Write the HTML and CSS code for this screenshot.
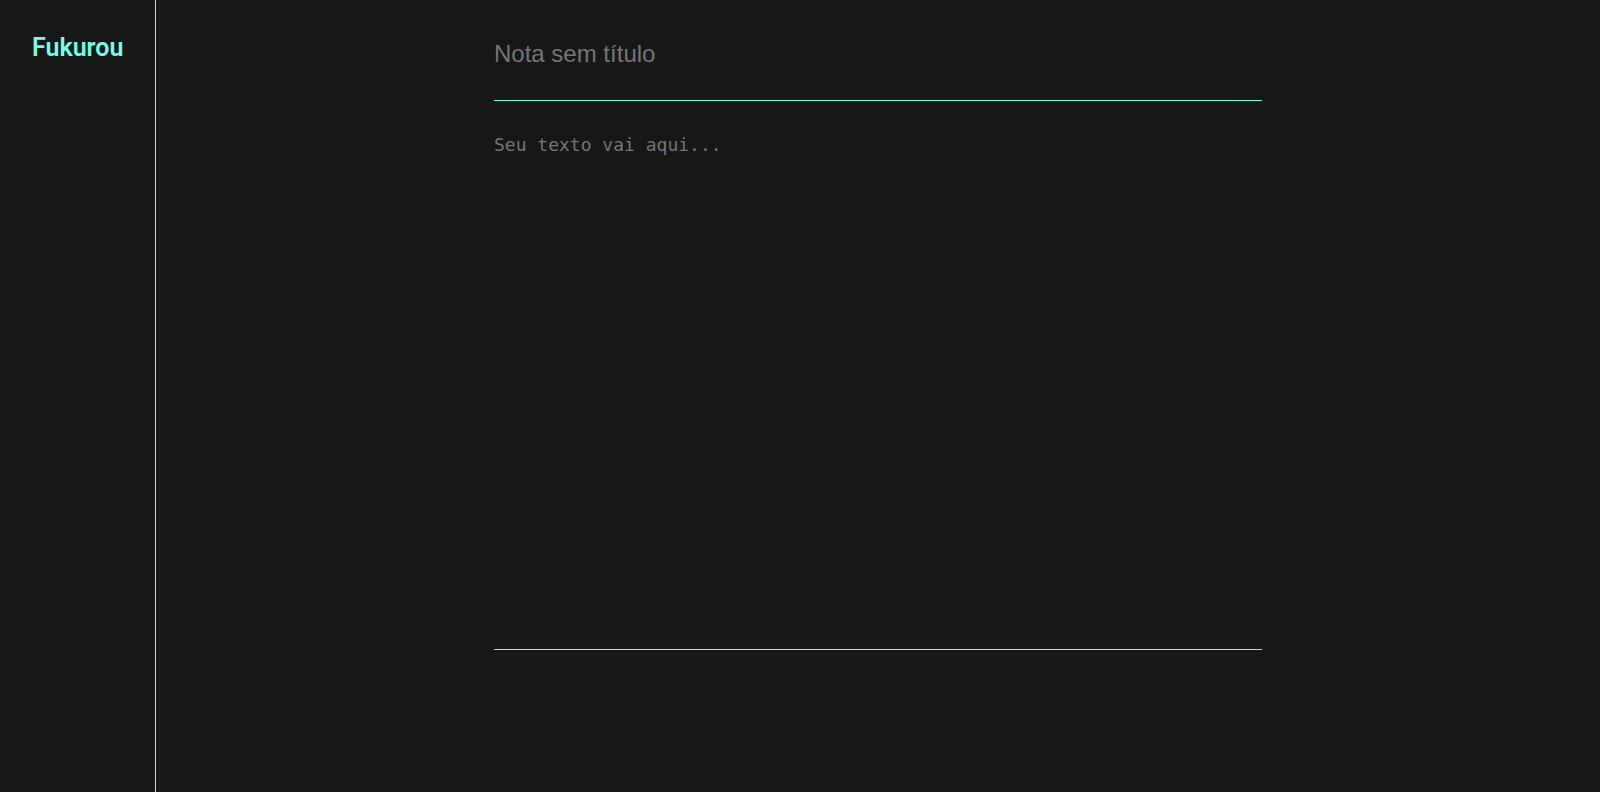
FILE: index.html
```html
<!DOCTYPE html>
<html lang="pt-BR">
<head>
<meta charset="utf-8">
<title>Fukurou</title>
<link rel="stylesheet" href="styles.css">
</head>
<body class="app">
  <aside class="sidebar"><h1 class="brand">Fukurou</h1></aside>
  <main class="editor">
    <form class="note">
      <input class="note-title" type="text" aria-label="Título da nota" placeholder="Nota sem título">
      <textarea class="note-text" aria-label="Texto da nota" placeholder="Seu texto vai aqui..."></textarea>
    </form>
  </main>
</body>
</html>
```

FILE: styles.css
```css
* { box-sizing: border-box; margin: 0; padding: 0; }
.app { display: flex; min-height: 100vh; background: #171717; color: #72ffe3; font-family: Roboto, sans-serif; }
.sidebar { flex: 0 0 156px; padding: 32px 0 32px 32px; border-right: 1px solid #72ffe3; }
.brand { font-size: 25px; line-height: 32px; font-weight: 600; }
.editor { flex: 1; display: flex; justify-content: center; }
.note { width: 100%; max-width: 768px; display: flex; flex-direction: column; }
.note-title, .note-text { width: 100%; border: 0; border-bottom: 1px solid #72ffe3; background: transparent; color: #fff; outline: 0; border-radius: 0; }
.note-title { padding: 40px 0 32px; font: 24px/28px "Liberation Sans", Arial, sans-serif; }
.note-text { flex: 0 0 auto; height: calc(100vh - 243px); padding: 32px 0; resize: none; font: 18px/24px "DejaVu Sans Mono", monospace; }
.note-title::placeholder, .note-text::placeholder { color: #757575; }
```
